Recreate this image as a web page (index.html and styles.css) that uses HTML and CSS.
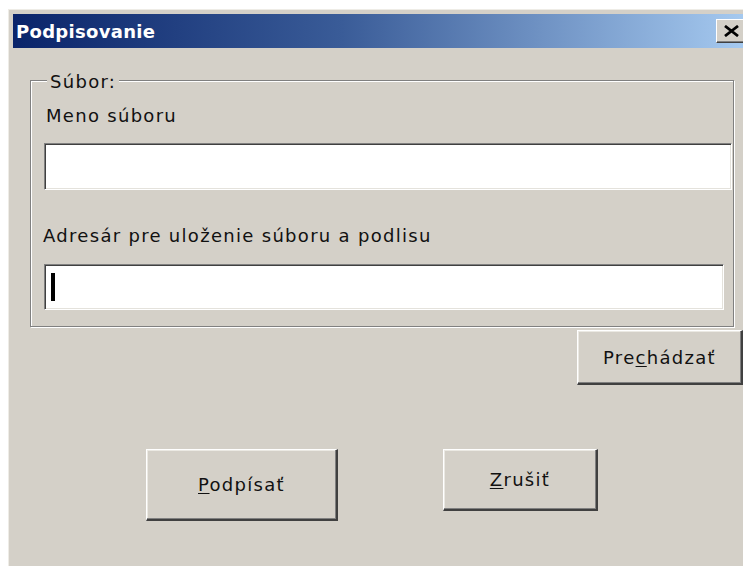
FILE: index.html
```html
<!DOCTYPE html>
<html lang="sk">
<head>
<meta charset="utf-8">
<title>Podpisovanie</title>
<link rel="stylesheet" href="styles.css">
</head>
<body>
<div class="window">
  <div class="titlebar">
    <span class="title">Podpisovanie</span>
    <button class="close" aria-label="Zavrieť">
      <svg width="17" height="12" viewBox="0 0 17 12" aria-hidden="true">
        <path d="M2 1 L15 11 M15 1 L2 11" stroke="#000" stroke-width="2.8" fill="none"/>
      </svg>
    </button>
  </div>
  <div class="client">
    <div class="group">
      <div class="group-title">Súbor:</div>
      <div class="label label-name">Meno súboru</div>
      <div class="field field-name"></div>
      <div class="label label-dir">Adresár pre uloženie súboru a podlisu</div>
      <div class="field field-dir"><span class="caret"></span></div>
    </div>
    <button class="btn btn-browse">Pre<u>c</u>hádzať</button>
    <div class="actions">
      <button class="btn btn-sign"><u>P</u>odpísať</button>
      <button class="btn btn-cancel"><u>Z</u>rušiť</button>
    </div>
  </div>
</div>
</body>
</html>
```
FILE: styles.css
```css
* { box-sizing: border-box; }

html, body {
  margin: 0;
  height: 100%;
  overflow: hidden;
  background: #fff;
}

body {
  font-family: "DejaVu Sans", sans-serif;
  font-size: 18px;
  letter-spacing: 1.3px;
  color: #111;
}

/* dialog frame */
.window {
  margin: 9px 0 0 8px;
  width: 760px;
  height: 557px;
  background: #d4d0c8;
  border-top: 1px solid #eeece6;
  border-left: 1px solid #eeece6;
  padding: 4px 0 0 4px;
}

.titlebar {
  display: flex;
  align-items: center;
  width: 733px;
  height: 34px;
  background: linear-gradient(90deg, #0a246a 0%, #3a5c98 45%, #a6caf0 100%);
}

.title {
  flex: 1;
  padding-left: 3px;
  color: #fff;
  font-weight: bold;
  font-size: 18px;
  letter-spacing: 0.3px;
}

.close {
  width: 30px;
  height: 24px;
  padding: 0;
  display: flex;
  align-items: center;
  justify-content: center;
  background: #d4d0c8;
  border: 1px solid;
  border-color: #fff #404040 #404040 #fff;
  box-shadow: inset -1px -1px 0 #808080;
}

.client {
  width: 730px;
  display: flex;
  flex-direction: column;
  align-items: flex-start;
}

/* etched group box */
.group {
  margin: 32px 0 0 17px;
  width: 704px;
  border: 1px solid #808080;
  box-shadow: inset 1px 1px 0 #fff, 1px 1px 0 #fff;
  padding: 0 0 16px 13px;
}

.group-title {
  width: max-content;
  margin: -10px 0 0 3px;
  padding: 0 3px;
  background: #d4d0c8;
  line-height: 21px;
}

.label { line-height: 21px; }

.label-name {
  margin-top: 13px;
  padding-left: 2px;
}

.label-dir {
  margin-top: 35px;
  margin-left: -1px;
}

/* sunken text fields */
.field {
  background: #fff;
  border: 1px solid;
  border-color: #808080 #fff #fff #808080;
  box-shadow: inset 1px 1px 0 #404040, inset -1px -1px 0 #e4e2dc;
}

.field-name {
  width: 688px;
  height: 47px;
  margin-top: 17px;
}

.field-dir {
  width: 680px;
  height: 46px;
  margin-top: 18px;
  display: flex;
  align-items: center;
}

.caret {
  width: 4px;
  height: 28px;
  margin-left: 6px;
  background: #000;
}

/* raised push buttons */
.btn {
  font: inherit;
  letter-spacing: inherit;
  color: #111;
  background: #d4d0c8;
  padding: 0;
  border-style: solid;
  border-width: 1px 2px 2px 1px;
  border-color: #fff #404040 #404040 #fff;
  box-shadow: inset -1px -1px 0 #808080, inset 1px 1px 0 #ebe9e3;
}

.btn u { text-underline-offset: 2px; }

.btn-browse {
  align-self: flex-end;
  margin-top: 3px;
  width: 166px;
  height: 55px;
}

.actions {
  display: flex;
  align-items: flex-start;
  gap: 105px;
  margin: 64px 0 0 133px;
}

.btn-sign {
  width: 192px;
  height: 72px;
}

.btn-cancel {
  width: 155px;
  height: 62px;
}
```
